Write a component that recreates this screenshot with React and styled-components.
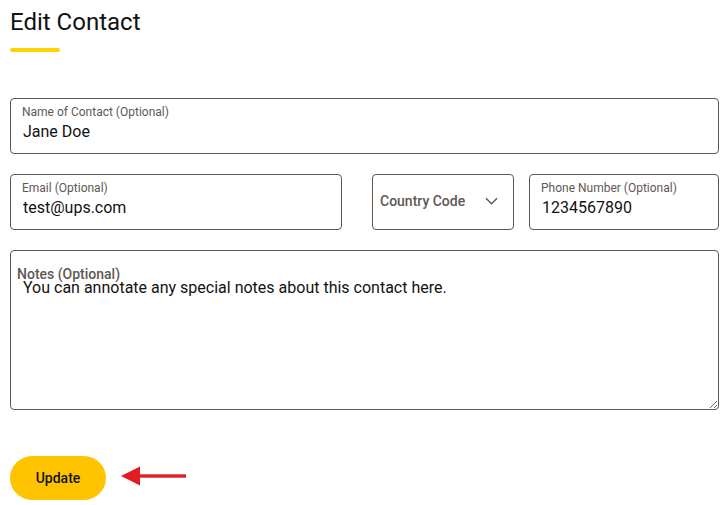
import React from 'react'
import styled, { createGlobalStyle } from 'styled-components'

const GlobalStyle = createGlobalStyle`
  html, body {
    margin: 0;
    padding: 0;
    background: #ffffff;
  }
  body {
    font-family: Roboto, "Liberation Sans", Arial, sans-serif;
    color: #121212;
  }
  * {
    box-sizing: border-box;
  }
`

const Page = styled.div`
  padding: 8px 8px 0 10px;
`

const Title = styled.h1`
  margin: 0;
  font-size: 24px;
  line-height: 28px;
  font-weight: 400;
  color: #121212;
`

const TitleBar = styled.div`
  width: 50px;
  height: 4px;
  margin-top: 12px;
  border-radius: 2px;
  background: #ffd100;
`

const Form = styled.form`
  display: flex;
  flex-direction: column;
  gap: 20px;
  margin-top: 46px;
`

const Field = styled.label`
  display: flex;
  flex-direction: column;
  height: 56px;
  min-width: 0;
  padding: 6px 11px 0;
  border: 1px solid #5f5753;
  border-radius: 4px;
  background: #fff;
  width: ${p => (p.$width ? `${p.$width}px` : 'auto')};
  flex: ${p => (p.$grow ? '1 1 0' : 'none')};
`

const FieldLabel = styled.span`
  font-size: 12px;
  line-height: 14px;
  color: #5f5753;
`

const Input = styled.input`
  width: 100%;
  margin-top: 3px;
  padding: 0 1px;
  border: none;
  outline: none;
  font-family: inherit;
  font-size: 16px;
  line-height: 20px;
  color: #121212;
  background: transparent;
`

const Row = styled.div`
  display: flex;
  gap: 30px;
`

const PhoneGroup = styled.div`
  display: flex;
  flex: 1 1 0;
  min-width: 0;
  gap: 15px;
`

const Select = styled.div`
  display: flex;
  align-items: center;
  justify-content: space-between;
  flex: none;
  width: 142px;
  height: 56px;
  padding: 0 15px 2px 7px;
  border: 1px solid #5f5753;
  border-radius: 4px;
  font-size: 14px;
  font-weight: 500;
  color: #5f5753;
`

const NotesWrap = styled.div`
  position: relative;
`

const NotesLabel = styled.span`
  position: absolute;
  top: 16px;
  left: 7px;
  font-size: 14px;
  line-height: 16px;
  font-weight: 500;
  color: #5f5753;
  pointer-events: none;
`

const Notes = styled.textarea`
  display: block;
  width: 100%;
  height: 160px;
  padding: 27px 12px 0 12px;
  border: 1px solid #5f5753;
  border-radius: 4px;
  font-family: inherit;
  font-size: 16px;
  line-height: 19px;
  color: #121212;
  resize: both;
  outline: none;
`

const Actions = styled.div`
  display: flex;
  align-items: center;
  gap: 15px;
  margin-top: 46px;
`

const UpdateButton = styled.button`
  width: 96px;
  height: 44px;
  border: none;
  border-radius: 22px;
  background: #ffc400;
  font-family: inherit;
  font-size: 14px;
  font-weight: 500;
  color: #121212;
  cursor: pointer;
`

const Chevron = () => (
  <svg width="13" height="8" viewBox="0 0 13 8" fill="none">
    <path d="M1 1.2l5.5 5.5 5.5-5.5" stroke="#5f5753" strokeWidth="1.4" />
  </svg>
)

const Arrow = () => (
  <svg width="66" height="22" viewBox="0 0 66 22" style={{ marginTop: -4 }}>
    <polygon points="0,11 19,1.5 19,20.5" fill="#e31c23" />
    <rect x="18" y="9.3" width="47" height="3.4" fill="#e31c23" />
  </svg>
)

export default function App() {
  return (
    <Page>
      <GlobalStyle />
      <Title>Edit Contact</Title>
      <TitleBar />
      <Form onSubmit={e => e.preventDefault()}>
        <Field>
          <FieldLabel>Name of Contact (Optional)</FieldLabel>
          <Input defaultValue="Jane Doe" />
        </Field>
        <Row>
          <Field $width={332}>
            <FieldLabel>Email (Optional)</FieldLabel>
            <Input defaultValue="test@ups.com" />
          </Field>
          <PhoneGroup>
            <Select>
              Country Code
              <Chevron />
            </Select>
            <Field $grow>
              <FieldLabel>Phone Number (Optional)</FieldLabel>
              <Input defaultValue="1234567890" />
            </Field>
          </PhoneGroup>
        </Row>
        <NotesWrap>
          <NotesLabel>Notes (Optional)</NotesLabel>
          <Notes defaultValue="You can annotate any special notes about this contact here." />
        </NotesWrap>
      </Form>
      <Actions>
        <UpdateButton type="button">Update</UpdateButton>
        <Arrow />
      </Actions>
    </Page>
  )
}
